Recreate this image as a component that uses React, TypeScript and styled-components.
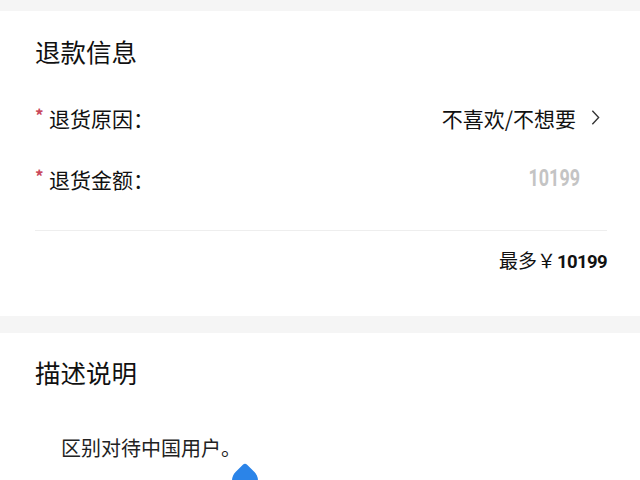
import React from 'react'
import styled, { createGlobalStyle } from 'styled-components'

const GlobalStyle = createGlobalStyle`
  body {
    margin: 0;
    background-color: #f5f5f5;
    font-family: 'Noto Sans CJK SC', 'Noto Sans', sans-serif;
    color: #111;
  }
`

const App = () => {
  return (
    <Page>
      <GlobalStyle />
      <Card pt="15px" pb="36px">
        <Title>退款信息</Title>
        <Rows>
          <Row>
            <Label><Star>*</Star>退货原因：</Label>
            <Value>
              不喜欢/不想要
              <Chevron viewBox="0 0 10 18">
                <path d="M1.5 1.5 L8.5 9 L1.5 16.5" fill="none" stroke="#333" strokeWidth="1.5" />
              </Chevron>
            </Value>
          </Row>
          <Row>
            <Label><Star>*</Star>退货金额：</Label>
            <Amount>10199</Amount>
          </Row>
        </Rows>
        <Divider />
        <Max>最多￥<b>10199</b></Max>
      </Card>
      <Card pt="14px" pb="60px" mt="17px">
        <Title>描述说明</Title>
        <Desc>
          区别对待中国用户。
          <Handle />
        </Desc>
      </Card>
    </Page>
  )
}

export default App

const Page = styled.div`
  width: 640px;
  height: 480px;
  overflow: hidden;
  padding-top: 11px;
  box-sizing: border-box;
`

const Card = styled.div<{ pt: string; pb: string; mt?: string }>`
  background-color: #fff;
  padding: ${(p) => p.pt} 33px ${(p) => p.pb} 35px;
  margin-top: ${(p) => p.mt || '0'};
  display: flex;
  flex-direction: column;
`

const Title = styled.div`
  font-size: 25.5px;
  line-height: 50px;
  height: 50px;
  color: #111;
`

const Rows = styled.div`
  margin-top: 11px;
  display: flex;
  flex-direction: column;
`

const Row = styled.div`
  height: 61px;
  display: flex;
  align-items: center;
  justify-content: space-between;
`

const Label = styled.div`
  font-size: 21px;
  display: flex;
  align-items: center;
  color: #111;
`

const Star = styled.span`
  color: #c9485b;
  font-size: 17px;
  width: 14px;
  margin-top: -6px;
  font-weight: 700;
`

const Value = styled.div`
  font-size: 21px;
  display: flex;
  align-items: center;
  padding-right: 7px;
  color: #111;
`

const Chevron = styled.svg`
  width: 9px;
  height: 17px;
  margin-left: 15px;
`

const Amount = styled.div`
  font-family: 'Roboto', sans-serif;
  font-size: 23px;
  color: #c4c4c4;
  margin-right: 27px;
  font-weight: 700;
  transform: scaleX(0.78);
  transform-origin: right center;
`

const Divider = styled.div`
  height: 1px;
  background-color: #eeeeee;
  margin-top: 21px;
`

const Max = styled.div`
  margin-top: 9px;
  height: 40px;
  line-height: 40px;
  text-align: right;
  font-size: 19px;
  color: #111;
  b {
    font-family: 'Roboto', sans-serif;
    font-size: 18.5px;
    font-weight: 700;
    letter-spacing: -0.6px;
    margin-left: 1px;
  }
`

const Desc = styled.div`
  position: relative;
  margin-top: 31px;
  padding-left: 26px;
  font-size: 20px;
  line-height: 40px;
  color: #222;
`

const Handle = styled.span`
  position: absolute;
  left: 197px;
  top: 40px;
  width: 26px;
  height: 26px;
  background-color: #2b84e8;
  border-radius: 3px 50% 50% 50%;
  transform: rotate(45deg);
`
